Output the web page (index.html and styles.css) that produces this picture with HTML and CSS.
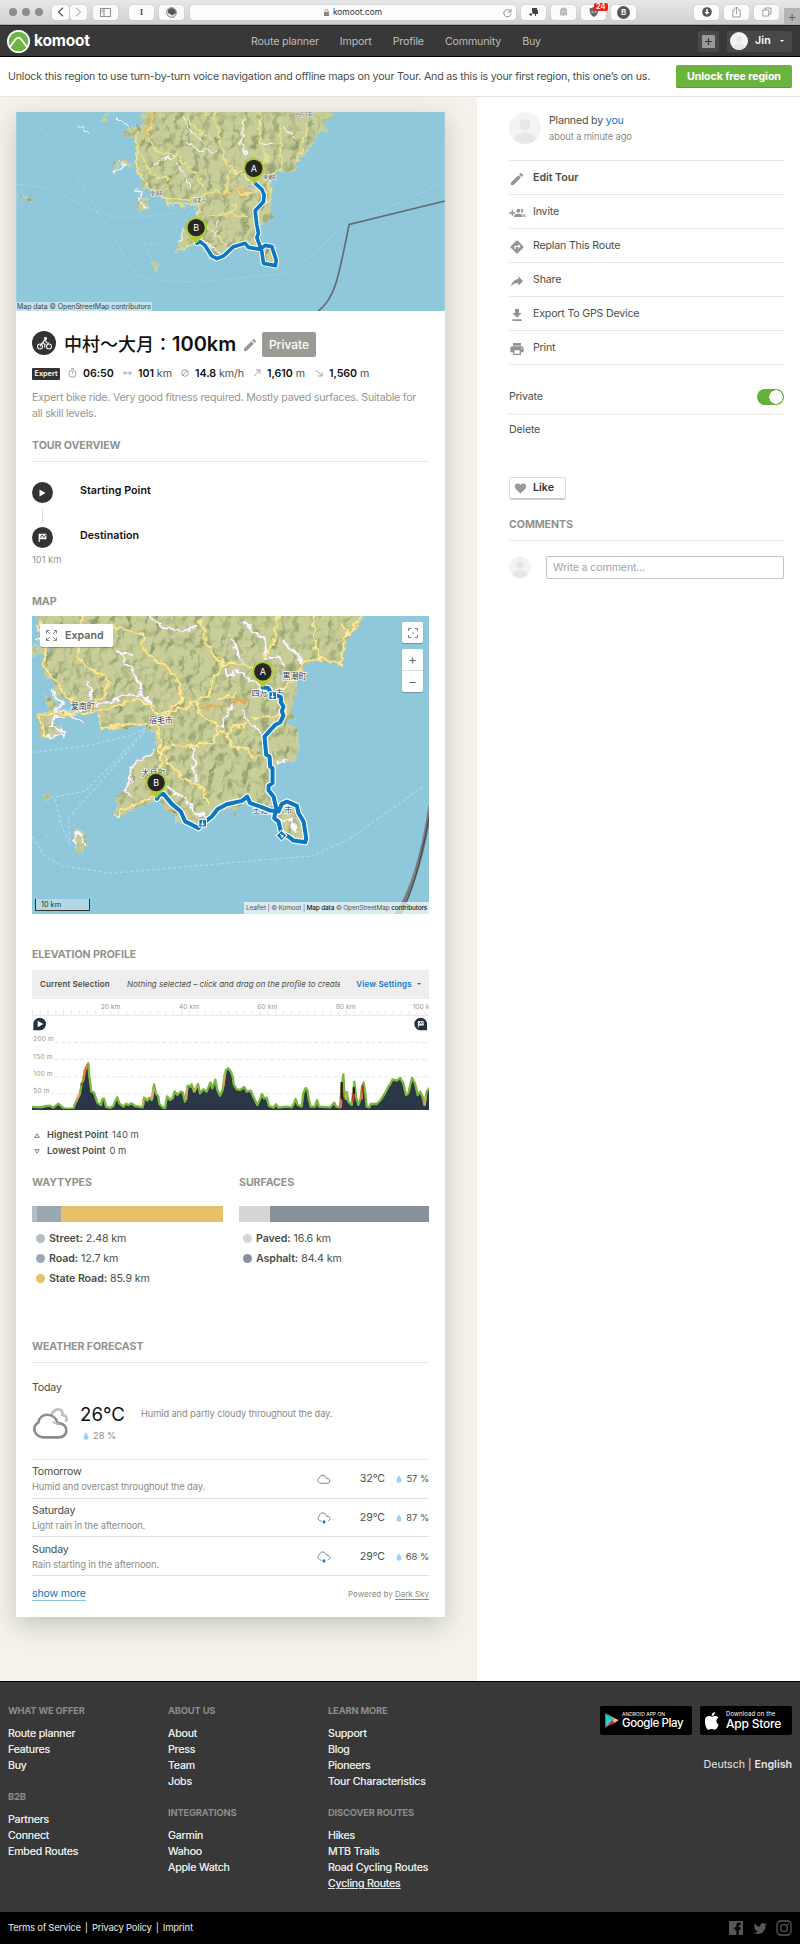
FILE: index.html
```html
<!DOCTYPE html>
<html lang="en">
<head>
<meta charset="utf-8">
<title>中村〜大月：100km | komoot</title>
<link rel="stylesheet" href="styles.css">
</head>
<body>
<svg width="0" height="0" class="defs">
  <defs>
    <filter id="relief" x="0" y="0" width="100%" height="100%" color-interpolation-filters="sRGB">
      <feTurbulence type="fractalNoise" baseFrequency="0.034 0.024" numOctaves="2" seed="8" result="n"/>
      <feDiffuseLighting in="n" surfaceScale="17" diffuseConstant="1.15" lighting-color="#fff" result="l"><feDistantLight azimuth="225" elevation="60"/></feDiffuseLighting>
      <feComponentTransfer in="l" result="s"><feFuncR type="linear" slope=".38" intercept=".59"/><feFuncG type="linear" slope=".32" intercept=".65"/><feFuncB type="linear" slope=".38" intercept=".58"/></feComponentTransfer>
      <feBlend in="SourceGraphic" in2="s" mode="multiply" result="m"/>
      <feComposite in="m" in2="SourceAlpha" operator="in"/>
    </filter>
    <filter id="rough" filterUnits="userSpaceOnUse" x="30" y="30" width="1310" height="920">
      <feTurbulence type="fractalNoise" baseFrequency="0.05" numOctaves="2" seed="3" result="n"/>
      <feDisplacementMap in="SourceGraphic" in2="n" scale="26" xChannelSelector="R" yChannelSelector="G"/>
    </filter>
    <symbol id="pencil" viewBox="0 0 24 24"><path d="M3 17.25V21h3.75L17.81 9.94l-3.75-3.75L3 17.25zM20.71 7.04a1 1 0 0 0 0-1.41l-2.34-2.34a1 1 0 0 0-1.41 0l-1.83 1.83 3.75 3.75 1.83-1.83z"/></symbol>
    <symbol id="person" viewBox="0 0 32 32"><circle cx="16" cy="16" r="16" fill="#f3f4f4"/><circle cx="16" cy="12.500" r="5.500" fill="#e6e8e8"/><path d="M5 27.500c1-9 21-9 22 0a16 16 0 0 1-22 0z" fill="#e6e8e8"/></symbol>
    <symbol id="drop" viewBox="0 0 12 16"><path d="M6 0c1 4 5 6 5 10.500a5 5 0 0 1-10 0C1 6 5 4 6 0z" fill="#97d3fb"/></symbol>
    <symbol id="flag" viewBox="0 0 20 20"><path d="M3 3h14v10H5v5H3z" fill="#fff"/><path d="M8 5h3v2.500H8zm3 2.500h3V10h-3zM5.500 8H8v2H5.500zM14 5h2v2.500h-2z" fill="#333"/></symbol>
    <symbol id="cloud" viewBox="0 0 40 30"><path d="M12 26h19a7 7 0 0 0 1-13.500h-5C25 1 10-1 7 10 0 12 1 25 12 26z" fill="none" stroke="#777" stroke-width="2.600"/></symbol>
    <symbol id="rain" viewBox="0 0 40 34"><path d="M14 26C4 27-1 15 7 11 9-1 25 0 27 12c12-1 13 11 4 13" fill="none" stroke="#777" stroke-width="2.600"/><path d="M20 22l4 6c1 3-1 5-4 5s-5-2-4-5z" fill="#0f76c8"/></symbol>
    <g id="pin"><path d="M0 48L-22 24A32 32 0 1 1 22 24z" fill="#b1c936"/><circle r="26" fill="#262626"/></g>
    <path id="minor" d="M390 52l40 35 60 5 40-15M665 60l45 45 25 20 5 55M630 110l20 45 25 40M790 115l15 30 30 20 10 30M290 158l40 2-30 5 30 40 30 45 10 40 30 20M200 240l10 30 0 30M615 205l5 25 30-20 40 30 40 20M640 310l-20 40-20 35M665 330l20 35 50 45M520 440l5 100 5 10M440 560l70 50 10 25 40 15M335 595l-20-25 20-25-5-40 30-20 40-30M100 275l25 40-25 25 35-10 55 40M150 340l100-30 50-15 60-15 40 40M75 410l50-5 10-10-40-15 5-30 35 0M170 735l-10-10 15-30 20 30 0 15M780 660l35 0 15 45M770 485l35-5M50 80l20 25-20 20M750 170l30 5 10 25"/>
    <path id="major" d="M60 60l15 100-5 45 45 45 10 30 40 20M50 350l55-10 100 0 60-15 90-30 40 25 15 25 100-25 30-25 30-10 5-50 25-20 10-40M190 40l-15 72 0 60 15 25 70 35 0 45-30 30M240 75l100 20 30 10 0 50 70 45 35 50 10 50-45 35-25 30M540 60l30 100 40 35 60-5 40 30M775 40l-10 72-25 60M880 40l5 102 20 35 60 20 5-80 15-10-20-35M1030 40l-50 72M905 180l-50 5-30 50-35 30-10 30 20 55M235 345l10 40 100-15 65 5 10 40 0 90-10 40 20 10M410 375l30-30M425 455l30-25 60 10 60-10 20-40 0-15-55-30-10-35M600 395l25 15 10 30 50 10 10 20 30 0M625 405l10-25 60-10M700 355l80-10M430 465l20 30 50 45 50 25 15 50M280 650l20 0 0-15 80-35 30-20M50 350l15 25 5 35 10 0M590 300l60-15"/>
    <path id="track" d="M727 263L744 265 752 280 782 292 782 308 790 320 785 335 790 347 780 368 765 375 733 410 738 465 748 470 750 500 757 505 757 550 745 558 745 572 760 590 768 625 762 655 775 665 783 700 805 710 820 722 855 727 858 715 850 665 835 640 830 618 800 605 785 612 775 635 750 632 725 622 690 610 681 590 665 603 620 613 592 628 575 650 547 672 535 685 510 672 495 665 482 635 455 612 430 582 418 585 410 597"/>
    <path id="herotrack" d="M765 250L785 268 792 285 790 305 765 332 770 375 775 400 770 412 780 440 785 455 790 490 826 497 828 480 815 440 795 436 780 448 745 442 735 430 700 440 670 468 650 476 635 468 615 437 600 425 590 430"/>
  </defs>
</svg>

<div class="browser">
  <i class="light"></i><i class="light"></i><i class="light"></i>
  <span class="bbtn back"><svg width="7" height="10" viewBox="0 0 7 10"><path d="M6 .8L1.500 5 6 9.200" fill="none" stroke="#555" stroke-width="1.200"/></svg></span>
  <span class="bbtn fwd"><svg width="7" height="10" viewBox="0 0 7 10"><path d="M1 .8L5.500 5 1 9.200" fill="none" stroke="#bbb" stroke-width="1.200"/></svg></span>
  <span class="bbtn side"><svg width="11" height="9" viewBox="0 0 11 9" fill="none" stroke="#777" stroke-width=".8"><path d="M.5.500h10v8H.5zM4 .5v8M1.500 2.500h1.500M1.500 4h1.500"/></svg></span>
  <span class="bbtn read">I</span>
  <span class="bbtn ball"><svg width="11" height="11" viewBox="0 0 11 11"><circle cx="5.500" cy="5.500" r="4.800" fill="#eee" stroke="#777"/><path d="M2 3c4-4 8 0 8 3L6 8.500 4 7 2 6z" fill="#555"/></svg></span>
  <span class="address"><svg width="5" height="7" viewBox="0 0 5 7"><path d="M0 3h5v4H0z" fill="#888"/><path d="M1 3V1.800a1.500 1.500 0 0 1 3 0V3" fill="none" stroke="#888" stroke-width=".8"/></svg>komoot.com
    <svg class="reload" width="9" height="10" viewBox="0 0 9 10"><path d="M7.600 3.500a3.600 3.600 0 1 0 .4 2M8 1v3H5" fill="none" stroke="#777" stroke-width=".8"/></svg></span>
  <span class="bbtn ext e1"><svg width="10" height="10" viewBox="0 0 10 10"><path d="M3 1h5v2h1v4H7v2H6V7H4L3 5z" fill="#444"/><circle cx="1.800" cy="7.500" r="1.300" fill="#444"/></svg></span>
  <span class="bbtn ext e2"><svg width="9" height="10" viewBox="0 0 9 10"><path d="M1 9V4a3.500 3.500 0 0 1 7 0v5L6.500 8l-2 1-2-1z" fill="#bbb"/><path d="M3 4h1v1H3zm2 0h1v1H5z" fill="#eee"/></svg></span>
  <span class="bbtn ext e3"><svg width="10" height="10" viewBox="0 0 10 10"><path d="M5 0l4.500 1.500C9.500 6 8 8.500 5 10 2 8.500.5 6 .5 1.500z" fill="#666"/><path d="M2.500 4h2v2h-2zm3 0h2v2h-2z" fill="#aaa"/></svg><b class="badge">24</b></span>
  <span class="bbtn ext e4"><b class="round">B</b></span>
  <span class="bbtn ext e5"><svg width="10" height="10" viewBox="0 0 10 10"><circle cx="5" cy="5" r="4.800" fill="#555"/><path d="M4.200 2h1.600v3h1.700L5 7.700 2.500 5h1.700z" fill="#fff"/></svg></span>
  <span class="bbtn ext e6"><svg width="9" height="12" viewBox="0 0 9 12" fill="none" stroke="#888" stroke-width=".8"><path d="M3 4H.8v7h7.400V4H6M4.500 8V1M2.500 3l2-2 2 2"/></svg></span>
  <span class="bbtn ext e7"><svg width="10" height="10" viewBox="0 0 10 10" fill="none" stroke="#888" stroke-width=".8"><path d="M.8 3h6v6h-6zM3 3V1h6v6H7"/></svg></span>
  <span class="newtab">+</span>
</div>

<header class="topbar">
  <svg class="mark" width="23" height="23" viewBox="0 0 66 66"><circle cx="33" cy="33" r="33" fill="#fff"/><circle cx="33" cy="33" r="28" fill="#6db544"/><path d="M7 51l18-25q8-8 15 0l19 25" fill="none" stroke="#fff" stroke-width="5"/><path d="M15 54l14-13 4 4 4-4 15 13q-18 12-37 0z" fill="#6db544"/></svg>
  <strong class="wordmark">komoot</strong>
  <nav class="nav"><a>Route planner</a><a>Import</a><a>Profile</a><a>Community</a><a>Buy</a></nav>
  <span class="add"><svg width="13" height="13" viewBox="0 0 13 13"><rect width="13" height="13" rx="1" fill="#999"/><path d="M6.500 3v7M3 6.500h7" stroke="#383838" stroke-width="1.200"/></svg></span>
  <span class="user"><svg width="18" height="18"><use href="#person"/></svg><b>Jin</b><i class="caret"></i></span>
</header>

<div class="unlock"><p>Unlock this region to use turn-by-turn voice navigation and offline maps on your Tour. And as this is your first region, this one’s on us.</p><a class="green">Unlock free region</a></div>

<main class="page">
<section class="left">
<article class="card">
  <div class="hero">
    <svg width="429" height="199" viewBox="48 36 1286 597">
      <rect x="48" y="36" width="1286" height="597" fill="#8fc8da"/>
      <g fill="none" stroke="#b5dbe6" stroke-width="2" stroke-dasharray="8 7"><path d="M80 40L200 175 300 350 410 525q60 25 200 20L860 520q40-15 150-125L1334 245M48 255q60-10 190 55 80 50 170 43l120-15 60-30M430 430l50 0 110-110M430 430l35 65"/></g>
      <g filter="url(#rough)">
      <path filter="url(#relief)" fill="#cfd5a0" d="M437 20L425 60 430 80 405 78 368 95 380 110 412 115 400 130 408 170 405 200 420 235 425 262 450 268 490 285 500 315 540 310 590 312 600 350 555 365 545 400 540 425 520 455 545 452 590 425 630 470 680 455 740 430 770 440 785 490 830 500 825 440 780 435 770 370 800 367 820 350 808 310 815 240 830 215 885 213 892 190 940 130 950 95 978 100 975 70 1010 20zM405 295l35-8 5 35-30 10zM455 485l12-8 10 20-14 20zM38 292l60 0 0 14-30-8zM310 50l15-10 0 15-15 12zM345 185l35-5 25 15-45 2-20 25z"/>
      <g fill="none" stroke="#f7f5f8" stroke-width="4" stroke-linejoin="round"><path d="M735 50l-8 50-8 30 25 35M545 50l25 40 45 40M562 125l25 20 60 12M525 190l20 20 25 55M700 220l25 5 30 25M780 130l40 0M850 85l40 30M345 60l45 15M236 80l35 22M350 183l30 10-40 28M405 265l20 10-10 30 25 20M650 360l0 50M600 410l60 50M540 430l10-50M455 190l70-22"/></g>
      <g fill="none" stroke="#eee28c" stroke-width="5" stroke-linejoin="round"><path d="M455 30l-10 85 25 40 60 10 55 55 35 50-30 45M410 90l0 120 25 45 50 35 70 10 80-25 100 5 60-10M420 165l40 65 50 10M560 40l30 50 50 30M640 30l30 140 35 50M780 30l0 90 20 60-60 30-50 5-15 60M840 75l5 130-35 20-8 90M925 70l-35 120M600 30l40 30M500 290l0 25 90 0 10 45 80 70M620 345l60-5 60 10M710 310l-20 35M540 450l50-25"/></g>
      <path d="M665 283l85-13M457 30l-25 95" fill="none" stroke="#eeb65b" stroke-width="5"/>
      </g>
      <path d="M955 633c50-40 60-100 92-260l287-70" fill="none" stroke="#626a74" stroke-width="5"/>
      <g class="labels tiny"><text x="452" y="284">愛南町</text><text x="578" y="307">宿毛市</text><text x="790" y="236">黒潮町</text><text x="742" y="265">四万十</text><text x="886" y="49">四万十町</text></g>
      <g fill="none" stroke-linejoin="round" stroke-linecap="round"><use href="#herotrack" stroke="#fff" stroke-width="17"/><use href="#herotrack" stroke="#0d78c2" stroke-width="11"/></g>
      <use href="#pin" x="761" y="205"/><use href="#pin" x="588" y="383"/>
      <g class="pinlet"><text x="761" y="215">A</text><text x="588" y="393">B</text></g>
    </svg>
    <span class="credit">Map data © OpenStreetMap contributors</span>
  </div>
  <div class="body">
    <div class="titlerow">
      <span class="sport"><svg width="15" height="13" viewBox="0 0 30 26" fill="none" stroke="#fff" stroke-width="2.200"><circle cx="6" cy="19" r="5"/><circle cx="24" cy="19" r="5"/><path d="M6 19l5-8 5 4-1 6M12 10l4-4 4 6h4"/><circle cx="17" cy="3" r="2" fill="#fff"/></svg></span>
      <h1><span class="cjk">中村〜大月：</span>100km</h1>
      <svg class="edit" width="16" height="16" fill="#999"><use href="#pencil"/></svg><span class="private">Private</span>
    </div>
    <div class="stats">
      <b class="expert">Expert</b>
      <svg width="9" height="10" viewBox="0 0 9 10" class="si"><circle cx="4.500" cy="5.700" r="3.600"/><path d="M3 .6h3M4.500 3.500v2"/></svg><span class="s1"><b>06:50</b></span>
      <svg width="9" height="8" viewBox="0 0 9 8" class="si"><path d="M.6 4h7.800M2.600 2l-2 2 2 2M6.400 2l2 2-2 2"/></svg><span class="s2"><b>101</b> km</span>
      <svg width="8" height="8" viewBox="0 0 8 8" class="si"><circle cx="4" cy="4" r="3.300"/><path d="M1 7l6-6"/></svg><span class="s3"><b>14.8</b> km/h</span>
      <svg width="8" height="8" viewBox="0 0 8 8" class="si"><path d="M1 7l6-6M3 1h4v4"/></svg><span class="s4"><b>1,610</b> m</span>
      <svg width="8" height="8" viewBox="0 0 8 8" class="si"><path d="M1 1l6 6M7 3v4H3"/></svg><span class="s5"><b>1,560</b> m</span>
    </div>
    <p class="desc">Expert bike ride. Very good fitness required. Mostly paved surfaces. Suitable for<br>all skill levels.</p>
    <h2 class="ruled overview">TOUR OVERVIEW</h2>
    <div class="stops">
      <div class="stop first"><span class="dot"><svg width="7" height="8" viewBox="0 0 7 8"><path d="M.5.500l6 3.500-6 3.500z" fill="#fff"/></svg></span><b>Starting Point</b></div>
      <div class="stop"><span class="dot"><svg width="11" height="11"><use href="#flag"/></svg></span><b>Destination</b></div>
      <small>101 km</small>
    </div>
    <h2 class="maphead">MAP</h2>
    <div class="map">
      <svg width="397" height="298" viewBox="36 49 1190 893">
        <rect x="36" y="49" width="1190" height="893" fill="#8fc8da"/>
        <g fill="none" stroke="#b9dde7" stroke-width="3" stroke-dasharray="9 7"><path d="M40 458l160-20 130-30 50-25M75 597l120-23 60-60 120-125M105 597l20 80 25 60M150 735l-5-80L380 390M36 710l40 60 50 28 150 22 400-35 200-17 110-50 225-160"/></g>
        <g filter="url(#rough)">
        <path filter="url(#relief)" fill="#cfd5a0" d="M60 30L50 110 75 160 70 215 100 250 105 280 160 312 155 345 140 330 115 340 100 290 70 290 90 335 45 345 60 375 60 410 100 415 130 390 100 365 110 350 150 345 235 340 240 390 330 385 370 375 405 400 415 450 350 480 330 515 335 540 290 590 285 640 320 640 400 600 425 610 450 640 480 670 530 685 590 635 635 620 645 650 660 620 685 605 720 630 760 640 775 665 785 715 850 730 850 680 825 615 770 610 745 560 760 490 820 485 838 440 830 390 800 360 820 355 815 320 828 285 830 245 860 195 910 183 960 195 970 160 985 110 1050 30zM160 700l18-20 20 30 5 30-40 25 5-40zM70 590l18-8 10 12-22 8zM75 702l12 0-5 8zM30 140l36-5 30 20-61 12z"/>
        <g fill="none" stroke-linejoin="round"><use href="#minor" stroke="#cfbfd0" stroke-width="8"/><use href="#minor" stroke="#faf8fb" stroke-width="6"/><use href="#major" stroke="#d8c068" stroke-width="9"/><use href="#major" stroke="#f8ea9c" stroke-width="6"/></g>
        <path d="M540 323l70-5 80-25" fill="none" stroke="#e8a957" stroke-width="8"/>
        </g>
        <path d="M1230 620q-35 230-105 330" fill="none" stroke="#777d83" stroke-width="12"/><path d="M1230 630q-40 230-90 312" fill="none" stroke="#444" stroke-width="3"/>
        <g class="labels"><text x="152" y="327">愛南町</text><text x="387" y="369">宿毛市</text><text x="787" y="237">黒潮町</text><text x="694" y="290">四万十市</text><text x="364" y="527">大月町</text><text x="696" y="640">土佐清水市</text></g>
        <g fill="none" stroke-linejoin="round" stroke-linecap="round"><use href="#track" stroke="#fff" stroke-width="19"/><use href="#track" stroke="#0d78c2" stroke-width="12"/></g>
        <g fill="#0d78c2" stroke="#fff" stroke-width="3"><path d="M746 276h23v23h-23zM536 658h23v23h-23zM784 691l16 16-16 16-16-16z"/><path fill="none" d="M757 280v14m-5-5l5 5 5-5M547 662v14m-5-5l5 5 5-5M780 703l8 8m0-6v6h-6"/></g>
        <use href="#pin" x="728" y="216"/><use href="#pin" x="408" y="548"/>
        <g class="pinlet"><text x="728" y="227">A</text><text x="408" y="559">B</text></g>
      </svg>
      <span class="expand"><svg width="11" height="11" viewBox="0 0 11 11" fill="none" stroke="#888"><path d="M.5 3.500v-3h3M7.500.500h3v3M10.500 7.500v3h-3M3.500 10.500h-3v-3M.5.500L4 4M10.500.500L7 4M10.500 10.500L7 7M.5 10.500L4 7"/></svg>Expand</span>
      <span class="locate"><svg width="10" height="10" viewBox="0 0 10 10" fill="none" stroke="#777"><path d="M.5 3V.5H3M7 .5h2.500V3M9.500 7v2.500H7M3 9.500H.5V7M4.200 5h1.600"/></svg></span>
      <span class="zoomer"><i>+</i><i>−</i></span>
      <span class="scale">10 km</span>
      <span class="leaf">Leaflet | © Komoot | <b>Map data</b> © OpenStreetMap <b>contributors</b></span>
    </div>
    <h2 class="elevhead">ELEVATION PROFILE</h2>
    <div class="selection"><b>Current Selection</b><em>Nothing selected – click and drag on the profile to create</em><a>View Settings <i class="caret"></i></a></div>
    <svg class="chart" width="397" height="111" viewBox="36 207 1191 333">
      <g class="axis"><text x="242" y="236" textLength="59">20 km</text><text x="477" y="236" textLength="60">40 km</text><text x="712" y="236" textLength="60">60 km</text><text x="947" y="236" textLength="60">80 km</text><text x="1178" y="236">100 k</text>
      <text x="40" y="334" textLength="61">200 m</text><text x="40" y="386" textLength="58">150 m</text><text x="40" y="438" textLength="58">100 m</text><text x="40" y="489" textLength="49">50 m</text></g>
      <path d="M36 248.500h1191" stroke="#ddd" stroke-width="13" stroke-dasharray="2 21.550"/>
      <path d="M36 256h1191" stroke="#e6e6e6" stroke-width="3"/>
      <path d="M104 337.500h1123M104 388.500h1123M104 440.500h1123M92 491.500h1135" stroke="#e6e6e6" stroke-width="3" stroke-dasharray="12 7"/>
      <path d="M40 301v-19a19 19 0 1 1 19 19zM1221 301v-19a19 19 0 1 0-19 19z" fill="#253040"/><path d="M53 272l17 10-17 10z" fill="#fff"/><use href="#flag" x="1190" y="270" width="25" height="25"/>
      <path fill="#2b3647" stroke="#78b83f" stroke-width="7" stroke-linejoin="round" d="M30 550L30 530 60 532 80 528 90 527 100 533 115 521 125 530 135 536 160 535 170 510 180 490 185 460 190 450 195 420 205 400 208 440 214 485 222 488 232 518 243 525 246 508 252 506 258 530 270 534 280 528 285 515 292 502 298 520 310 530 318 521 325 525 335 520 345 528 368 532 372 503 382 512 388 503 395 510 402 463 408 490 415 500 418 522 426 530 435 536 441 499 450 510 458 505 464 484 472 495 482 485 488 488 495 515 503 467 512 470 515 463 522 485 534 462 540 490 550 478 560 485 566 470 571 457 577 475 586 449 592 480 600 497 608 480 613 440 618 420 625 415 632 425 638 440 641 463 650 478 660 480 673 471 680 485 692 482 700 500 712 525 720 508 726 492 732 505 740 503 747 528 760 533 768 523 775 533 800 530 815 532 822 520 827 507 833 525 845 530 850 490 857 474 862 480 867 510 872 530 885 530 891 510 897 530 930 532 943 518 948 530 960 532 965 470 970 433 974 500 981 487 985 515 995 525 1003 455 1008 500 1015 525 1022 505 1026 470 1031 458 1036 490 1040 530 1048 532 1052 522 1070 522 1082 510 1095 490 1105 470 1112 460 1118 448 1130 452 1141 444 1150 460 1158 495 1165 490 1176 444 1185 460 1193 495 1200 485 1208 500 1213 525 1220 485 1227 475 1235 475V550z"/>
      <g fill="none" stroke-width="7"><path d="M190 450l5-30 8-17M962 532l2-20M1025 490l0 18" stroke="#ef7040"/><path d="M182 463h6M1000 515v-22M1028 488v-22" stroke="#dc1f31"/><path d="M965 508v-52M1002 492v-20" stroke="#431419"/><path d="M168 515l12-25M396 508l5-30M498 510l4-35M610 470l5-40M977 510l4-20M1158 490l4 0M1214 525l3-25M370 525v-15M523 485l8-18" stroke="#d8a854"/></g>
      <path d="M36 538.500h1191" stroke="#2b3647" stroke-width="3"/>
    </svg>
    <div class="points"><p><svg width="6" height="5" viewBox="0 0 6 5" class="tri"><path d="M3 .8L5.300 4.400H.7z"/></svg><b>Highest Point</b> 140 m</p><p><svg width="6" height="5" viewBox="0 0 6 5" class="tri"><path d="M3 4.200L.7.600h4.600z"/></svg><b>Lowest Point</b> 0 m</p></div>
    <div class="split">
      <div><h2>WAYTYPES</h2><div class="bar"><i class="c-street" style="width:2.5%"></i><i class="c-road" style="width:12.6%"></i><i class="c-state" style="width:84.9%"></i></div>
        <ul><li><i class="c-street"></i><b>Street:</b> 2.48 km</li><li><i class="c-road"></i><b>Road:</b> 12.7 km</li><li><i class="c-state"></i><b>State Road:</b> 85.9 km</li></ul></div>
      <div><h2>SURFACES</h2><div class="bar"><i class="c-paved" style="width:16.5%"></i><i class="c-asphalt" style="width:83.5%"></i></div>
        <ul><li><i class="c-paved"></i><b>Paved:</b> 16.6 km</li><li><i class="c-asphalt"></i><b>Asphalt:</b> 84.4 km</li></ul></div>
    </div>
    <h2 class="ruled weather">WEATHER FORECAST</h2>
    <p class="today">Today</p>
    <div class="now">
      <svg class="bigcloud" width="36" height="31" viewBox="0 0 108 93" fill="none"><path d="M55 20C68-4 92 2 88 20c16 4 16 16 8 20" stroke="#bcc3c4" stroke-width="8"/><path d="M30 88H78a20 20 0 0 0 2-42H74C66 12 20 12 16 44-4 56 2 84 30 88z" fill="#fff" stroke="#8c8c8c" stroke-width="8"/><path d="M60 40q8 12 18 6" stroke="#bcc3c4" stroke-width="5"/></svg>
      <div class="temp"><span class="deg">26°C</span><span class="hum"><svg width="6" height="8"><use href="#drop"/></svg>28 %</span></div>
      <span class="nowtext">Humid and partly cloudy throughout the day.</span>
    </div>
    <div class="day"><div><p>Tomorrow</p><small>Humid and overcast throughout the day.</small></div><svg width="14" height="11"><use href="#cloud"/></svg><span class="t">32°C</span><span class="h"><svg width="6" height="8"><use href="#drop"/></svg>57 %</span></div>
    <div class="day"><div><p>Saturday</p><small>Light rain in the afternoon.</small></div><svg width="14" height="12"><use href="#rain"/></svg><span class="t">29°C</span><span class="h"><svg width="6" height="8"><use href="#drop"/></svg>87 %</span></div>
    <div class="day"><div><p>Sunday</p><small>Rain starting in the afternoon.</small></div><svg width="14" height="12"><use href="#rain"/></svg><span class="t">29°C</span><span class="h"><svg width="6" height="8"><use href="#drop"/></svg>68 %</span></div>
    <div class="more"><a>show more</a><span>Powered by <u>Dark Sky</u></span></div>
  </div>
</article>
</section>

<aside class="aside">
  <div class="author"><svg width="32" height="32"><use href="#person"/></svg><div><p>Planned by <a>you</a></p><small>about a minute ago</small></div></div>
  <ul class="actions">
    <li><svg viewBox="0 0 24 24"><use href="#pencil"/></svg><b>Edit Tour</b></li>
    <li><svg viewBox="0 0 24 24"><path d="M4 7v4H0v2h4v0 3h2v-3h3v-2H6V7zM14 11.500a3 3 0 1 0 0-6 3 3 0 0 0 0 6zM18.500 11.500a3 3 0 1 0 0-6l-.8.100a5 5 0 0 1 0 5.700zM14 13c-3 0-6.500 1.300-6.500 3.500V18h13v-1.500C20.500 14.300 17 13 14 13zM20 13.200c1.400.8 2 2 2 3.300V18h2.500v-1.500c0-1.600-2-2.700-4.500-3.300z"/></svg>Invite</li>
    <li><svg viewBox="0 0 24 24"><path d="M21.710 11.290l-9-9a1 1 0 0 0-1.410 0l-9 9a1 1 0 0 0 0 1.410l9 9a1 1 0 0 0 1.410 0l9-9a1 1 0 0 0 0-1.410zM14 14.500V12h-4v3H8v-4a1 1 0 0 1 1-1h5V7.500l3.500 3.500-3.500 3.500z"/></svg>Replan This Route</li>
    <li><svg viewBox="0 0 24 24"><path d="M14 5v4C7 10 4 15 3 20c2.500-3.500 6-5.100 11-5.100V19l7-7z"/></svg>Share</li>
    <li><svg viewBox="0 0 24 24"><path d="M19 9h-4V3H9v6H5l7 7zM5 18.500V21h14v-2.500z"/></svg>Export To GPS Device</li>
    <li><svg viewBox="0 0 24 24"><path d="M19 8H5a3 3 0 0 0-3 3v6h4v4h12v-4h4v-6a3 3 0 0 0-3-3zm-3 11H8v-5h8zm3-7a1 1 0 1 1 0-2 1 1 0 0 1 0 2zM18 3H6v4h12z"/></svg>Print</li>
  </ul>
  <div class="privacy"><span>Private</span><i class="toggle"></i></div>
  <p class="delete">Delete</p>
  <a class="like"><svg width="13" height="13" viewBox="0 0 24 24" fill="#999"><path d="M12 21.500C5 15 1.500 12.500 1.500 8 1.500 2 9 1 12 5.500 15 1 22.500 2 22.500 8c0 4.500-3.500 7-10.500 13.500z"/></svg>Like</a>
  <h2 class="ruled comments">COMMENTS</h2>
  <div class="write"><svg width="22" height="22"><use href="#person"/></svg><span>Write a comment...</span></div>
</aside>
</main>

<footer class="footer">
  <div class="fcol"><h3>WHAT WE OFFER</h3><a>Route planner</a><a>Features</a><a>Buy</a><h3>B2B</h3><a>Partners</a><a>Connect</a><a>Embed Routes</a></div>
  <div class="fcol"><h3>ABOUT US</h3><a>About</a><a>Press</a><a>Team</a><a>Jobs</a><h3>INTEGRATIONS</h3><a>Garmin</a><a>Wahoo</a><a>Apple Watch</a></div>
  <div class="fcol"><h3>LEARN MORE</h3><a>Support</a><a>Blog</a><a>Pioneers</a><a>Tour Characteristics</a><h3>DISCOVER ROUTES</h3><a>Hikes</a><a>MTB Trails</a><a>Road Cycling Routes</a><a><u>Cycling Routes</u></a></div>
  <div class="apps">
    <div class="stores">
      <span class="store play"><svg width="14" height="15" viewBox="0 0 42 45"><path d="M1 1v43l22-22z" fill="#2bd3c6"/><path d="M1 1l22 21 6-7z" fill="#69b7a0"/><path d="M1 44l22-22 6 7z" fill="#e8274b"/><path d="M29 15l12 7-12 8-7-8z" fill="#f6b36b"/></svg><span><small>ANDROID APP ON</small><b>Google Play</b></span></span>
      <span class="store apple"><svg width="14" height="18" viewBox="0 0 42 54" fill="#fff"><path d="M21 14c4 0 7-3 11-2 3 0 6 2 8 5-9 6-7 17 1 21-3 8-7 15-12 15-4 0-5-2-9-2s-5 2-9 2C2 53-6 20 5 14c6-4 12 0 16 0zM20 12c0-6 4-11 10-12 0 6-4 12-10 12z"/></svg><span><small>Download on the</small><b>App Store</b></span></span>
    </div>
    <p class="lang">Deutsch&nbsp;|&nbsp;<b>English</b></p>
  </div>
</footer>
<div class="legal">
  <p>Terms of Service<i>|</i>Privacy Policy<i>|</i>Imprint</p>
  <svg width="64" height="16" viewBox="0 0 192 48"><path fill="#575757" d="M3 3h42v42H32V29h6v-7h-6v-4q0-4 6-3V8c-10-2-13 2-13 9v5h-6v7h6v16H3z"/><path fill="#575757" transform="translate(75 4) scale(1.800)" d="M23 3a10.900 10.900 0 0 1-3.140 1.530 4.480 4.480 0 0 0-7.860 3v1A10.660 10.660 0 0 1 3 4s-4 9 5 13a11.640 11.640 0 0 1-7 2c9 5 20 0 20-11.500l-.08-.83A7.720 7.720 0 0 0 23 3z"/><g fill="none" stroke="#575757" stroke-width="4"><rect x="147" y="3" width="42" height="42" rx="11"/><circle cx="168" cy="24" r="10"/><path d="M178 13h5"/></g></svg>
</div>
</body>
</html>
```

FILE: styles.css
```css
* { box-sizing: border-box; }
body { margin: 0; width: 800px; background: #fff; color: #4b4f48; font: 10.67px/16px Inter, "Noto Sans CJK JP", sans-serif; letter-spacing: -0.2px; }
p, h1, h2, h3, ul { margin: 0; padding: 0; }
ul { list-style: none; }
svg { display: block; flex: none; }
b { font-weight: 600; }
.defs { position: absolute; }

.browser { height: 25px; display: flex; align-items: center; padding-left: 9px; background: linear-gradient(#e8e8e8, #d0d0d0); border-bottom: 1px solid #aaa; }
.light { width: 8px; height: 8px; border-radius: 50%; background: #8b8e90; margin-right: 5px; }
.bbtn { height: 15px; width: 25px; flex: none; display: flex; align-items: center; justify-content: center; background: #fbfbfb; border-radius: 3px; box-shadow: 0 0 1px #999; color: #555; }
.back { width: 17px; margin-left: 4px; }
.fwd { width: 17px; margin-left: 1px; }
.side { margin-left: 6px; }
.read { margin-left: 11px; font: 700 9px/15px "Liberation Serif", serif; }
.ball { margin-left: 5px; }
.address { position: relative; width: 326px; height: 15px; flex: none; margin-left: 6px; background: #fdfdfd; border-radius: 3px; box-shadow: 0 0 1px #999; display: flex; align-items: center; justify-content: center; gap: 4px; font-size: 8.400px; color: #333; letter-spacing: 0; }
.reload { position: absolute; right: 4px; top: 3px; }
.ext { margin-left: 5px; width: 25px; position: relative; }
.e5 { margin-left: 58px; }
.round { width: 13px; height: 13px; border-radius: 50%; background: #555; color: #fff; font-size: 8px; line-height: 13px; text-align: center; }
.badge { position: absolute; left: 13px; top: -2px; background: #fb1b1e; color: #fff; border-radius: 2px; font-size: 7.500px; line-height: 8px; padding: 0 2px; letter-spacing: 0; }
.newtab { margin-left: auto; width: 16px; height: 16px; align-self: flex-end; background: #b5b5b5; color: #666; text-align: center; font-size: 14px; line-height: 16px; }

.topbar { height: 32px; display: flex; align-items: center; padding-left: 7px; background: #383838; border-top: 1px solid #222; border-bottom: 1px solid #000; }
.wordmark { width: 57px; margin-left: 4px; color: #fff; font: 700 15.500px/20px Inter, sans-serif; letter-spacing: -0.2px; }
.nav { display: flex; gap: 21px; margin-left: 160px; color: #bcbcbc; letter-spacing: -.16px; padding-top: 1px; }
.add { margin-left: auto; width: 21px; height: 21px; border-radius: 2px; background: #484848; display: flex; align-items: center; justify-content: center; }
.user { width: 65px; height: 21px; margin: 0 8px; border-radius: 2px; background: #484848; display: flex; align-items: center; padding-left: 3px; color: #fff; }
.user b { margin-left: 7px; width: 25px; letter-spacing: .1px; }
.caret { display: inline-block; border: 2.500px solid transparent; border-top-color: currentColor; border-bottom: 0; vertical-align: 2px; }
.unlock { height: 40px; display: flex; align-items: center; justify-content: space-between; padding: 0 8px; border-bottom: 1px solid #e4e4e4; white-space: nowrap; }
.unlock p { padding-top: 1px; letter-spacing: -.21px; }
.green { width: 116px; height: 23px; background: #6bb53f; border-bottom: 1px solid #559c2e; border-radius: 2px; color: #fff; font-weight: 700; line-height: 23px; text-align: center; letter-spacing: -.1px; }

.page { display: flex; height: 1584px; }
.left { width: 477px; background: #f4f2ea; padding: 15px 0 0 16px; }
.card { width: 429px; height: 1505px; background: #fff; box-shadow: 0 8px 24px rgba(80,85,60,.28); }
.hero { position: relative; height: 199px; }
.credit { position: absolute; left: 0; bottom: 0; height: 9px; padding: 0 1px; background: rgba(255,255,255,.45); font-size: 7px; line-height: 9px; color: #444; letter-spacing: -.05px; }
.labels { font: 24px "Noto Sans CJK JP", sans-serif; fill: #333; stroke: #fff; stroke-width: 4; paint-order: stroke; letter-spacing: 0; }
.tiny { font-size: 13px; stroke-width: 2; }
.pinlet { font: 27px Inter, sans-serif; fill: #fff; text-anchor: middle; }
.body { padding: 0 16px; }
.titlerow { margin-top: 18px; height: 28px; display: flex; align-items: center; }
.sport { width: 24px; height: 24px; border-radius: 50%; background: #333; display: flex; align-items: center; justify-content: center; }
h1 { margin-left: 8px; width: 174px; font-size: 20px; line-height: 28px; font-weight: 600; color: #111; letter-spacing: 0; white-space: nowrap; }
.cjk { font-size: 18px; font-weight: 500; font-family: "Noto Sans CJK JP", sans-serif; }
.edit { margin: 4px 0 0 4px; }
.private { margin: 3px 0 0 4px; width: 54px; height: 25px; border-radius: 2px; background: #9a9b94; color: #fff; font-size: 12px; line-height: 25px; text-align: center; font-weight: 500; letter-spacing: 0; }
.stats { display: flex; align-items: center; height: 16px; margin-top: 8px; white-space: nowrap; letter-spacing: 0; }
.stats b { color: #111; }
.stats .expert { width: 28px; height: 12px; margin: 2px 8px 0 0; background: #333; color: #fff; border-radius: 1px; font-size: 7.300px; line-height: 12px; text-align: center; }
.si { fill: none; stroke: #999; stroke-width: .9; }
.stats span { margin-left: 6px; padding-top: 1px; letter-spacing: -.05px; }
.stats .s1 { width: 40px; } .stats .s2 { width: 43px; } .stats .s3 { width: 58px; } .stats .s4 { width: 48px; }
.desc { margin-top: 9px; color: #96978f; white-space: nowrap; letter-spacing: -.235px; }
h2 { padding-top: 1px; margin-bottom: -1px; font-size: 10.67px; line-height: 16px; font-weight: 700; color: #92938b; letter-spacing: -.1px; }
.ruled { padding-bottom: 7px; margin-bottom: 0; border-bottom: 1px solid #e6e6e6; }
.overview { margin-top: 15px; }
.stops { margin-top: 20px; color: #111; }
.stop { display: flex; height: 21px; }
.stop b { padding-top: 1px; letter-spacing: .05px; }
.first { height: 45px; position: relative; }
.first::after { content: ""; position: absolute; left: 10px; top: 26px; height: 15px; border-left: 1px dotted #bbb; }
.dot { width: 21px; height: 21px; margin-right: 27px; border-radius: 50%; background: #333; display: flex; align-items: center; justify-content: center; }
.stops small { display: block; margin-top: 4px; font-size: 9.330px; color: #96978f; letter-spacing: 0; }
.maphead { margin-top: 25px; }
.map { position: relative; height: 298px; margin-top: 7px; }
.expand, .locate, .zoomer { position: absolute; background: #fff; border-radius: 2px; box-shadow: 0 1px 1px rgba(0,0,0,.25); display: flex; align-items: center; }
.expand { left: 8px; top: 8px; width: 73px; height: 23px; padding-left: 6px; gap: 8px; font-weight: 600; letter-spacing: 0; color: #666; }
.locate { left: 370px; top: 6px; width: 21px; height: 21px; justify-content: center; }
.zoomer { left: 370px; top: 33px; width: 21px; height: 43px; flex-direction: column; color: #666; }
.zoomer i { height: 22px; width: 21px; font: 13px/20px Inter, sans-serif; text-align: center; }
.zoomer i + i { border-top: 1px solid #ddd; }
.scale { position: absolute; left: 3px; bottom: 3px; width: 55px; height: 12px; border: 1px solid #333; border-top: 0; background: rgba(255,255,255,.3); font-size: 7.300px; line-height: 11px; padding-left: 5px; color: #333; letter-spacing: 0; }
.leaf { position: absolute; right: 0; bottom: 0; width: 185px; height: 12px; padding-left: 2px; background: rgba(255,255,255,.65); font-size: 6.500px; line-height: 12px; color: #555; letter-spacing: -.17px; white-space: nowrap; }
.leaf b { font-weight: 500; color: #222; }
.elevhead { margin-top: 32px; }
.selection { display: flex; height: 29px; margin-top: 8px; padding: 0 8px; background: #eee; font-size: 8px; line-height: 28px; letter-spacing: 0; }
.selection b { width: 87px; letter-spacing: .12px; }
.selection em { width: 213px; overflow: hidden; white-space: nowrap; }
.selection a { margin-left: auto; color: #0f76c8; font-weight: 600; letter-spacing: .2px; white-space: nowrap; }
.selection .caret { margin-left: 3px; }
.chart .axis { font: 20px Inter, sans-serif; fill: #999; letter-spacing: 0; }
.points { margin-top: 17px; font-size: 9.330px; letter-spacing: 0; padding-left: 2px; }
.points p { display: flex; align-items: center; }
.points b { margin: 0 4px 0 7px; letter-spacing: .06px; }
.tri { fill: none; stroke: #666; stroke-width: .8; }
.split { display: grid; grid-template-columns: 191px 190px; column-gap: 16px; margin-top: 15px; height: 114px; }
.bar { display: flex; height: 16px; margin: 16px 0 6px; }
.split li { height: 20px; line-height: 21px; padding-left: 4px; display: flex; align-items: center; gap: 3px; letter-spacing: -.1px; }
.split li i { width: 9px; height: 9px; border-radius: 50%; margin-right: 1px; }
.c-street { background: #b3bec4; } .c-road { background: #9ba8b3; } .c-state { background: #e7c06c; } .c-paved { background: #d5d7d7; } .c-asphalt { background: #86919c; }
.weather { margin-top: 50px; }
.today { margin-top: 16px; padding-top: 1px; margin-bottom: -1px; }
.now { display: flex; height: 65px; border-bottom: 1px solid #e6e6e6; }
.bigcloud { margin: 13px 11px 0 1px; }
.temp { width: 61px; }
.deg { display: block; margin-top: 8px; font-size: 18.670px; line-height: 23px; color: #111; letter-spacing: 0; }
.hum { display: flex; align-items: center; gap: 4px; padding: 2px 0 0 3px; font-size: 9.330px; color: #8b8c85; letter-spacing: 0; }
.nowtext { margin-top: 11px; font-size: 9.330px; color: #8b8c85; letter-spacing: -.12px; }
.day { display: flex; align-items: center; height: 38.670px; padding-top: 1px; border-bottom: 1px solid #e0e0e0; }
.day div { width: 285px; line-height: 15px; }
.day small { display: block; font-size: 9.330px; color: #8b8c85; letter-spacing: -.1px; }
.day .t { width: 54px; text-align: right; letter-spacing: -.1px; }
.h { margin-left: auto; display: flex; align-items: center; gap: 4px; font-size: 9.330px; letter-spacing: -.05px; }
.more { display: flex; justify-content: space-between; margin-top: 10px; }
.more a { color: #0f76c8; border-bottom: 1px solid #8fc1e4; line-height: 13px; height: 14px; margin-top: 1px; }
.more span { font-size: 8px; color: #8b8c85; letter-spacing: 0; }
.more u { text-underline-offset: 2px; }

.aside { margin-left: 32px; width: 275px; padding-top: 15px; }
.author { display: flex; gap: 8px; height: 49px; border-bottom: 1px solid #e6e6e6; }
.author div { padding-top: 1px; }
.author small { display: block; font-size: 9.330px; color: #8b8c85; letter-spacing: -.1px; }
.author a { color: #0f76c8; }
.actions li { display: flex; align-items: center; height: 34px; border-bottom: 1px solid #e6e6e6; }
.actions b { letter-spacing: -.05px; }
.actions svg { width: 16px; height: 16px; margin: 2px 8px 0 0; fill: #949494; overflow: visible; }
.privacy { display: flex; justify-content: space-between; align-items: center; margin-top: 16px; height: 34px; border-bottom: 2px solid #f2f2f2; }
.toggle { width: 27px; height: 16px; border-radius: 8px; background: radial-gradient(circle at 19px 8px, #fff 6.500px, #65b037 7px); }
.delete { margin-top: 7px; }
.like { display: flex; align-items: center; gap: 6px; width: 57px; height: 23px; margin-top: 39px; padding-left: 4px; border: 1px solid #ddd; border-bottom: 2px solid #ccc; border-radius: 3px; font-weight: 600; color: #333; letter-spacing: 0; }
.comments { margin-top: 16px; }
.write { display: flex; justify-content: space-between; margin-top: 15px; }
.write span { width: 238px; height: 23px; border: 1px solid #c4c4c4; border-radius: 2px; padding-left: 6px; line-height: 22px; color: #a5a5a5; letter-spacing: -.15px; }

.footer { height: 231px; display: flex; padding: 21px 8px 0; background: #383838; border-top: 1px solid #000; color: #e4e4e4; }
.fcol { width: 160px; }
.fcol a { display: block; text-shadow: 0 0 .5px #e4e4e4; }
.fcol h3 { font-size: 9.330px; line-height: 16px; font-weight: 700; color: #8c8c8c; margin-bottom: 7px; letter-spacing: -.15px; }
.fcol a + h3 { margin-top: 15px; }
.apps { margin-left: auto; width: 192px; }
.stores { display: flex; gap: 8px; margin-top: 3px; }
.store { display: flex; align-items: center; width: 92px; height: 29px; background: #000; border-radius: 2px; color: #fff; padding-left: 5px; gap: 3px; }
.apple { gap: 7px; }
.store small, .store b { display: block; white-space: nowrap; }
.store small { font-size: 5px; line-height: 6px; letter-spacing: 0; }
.store b { font-size: 11.500px; line-height: 13px; font-weight: 500; letter-spacing: -.4px; }
.store.apple small { font-size: 6px; letter-spacing: .1px; }
.store.apple b { font-size: 12px; letter-spacing: -.2px; }
.lang { text-align: right; margin-top: 22px; letter-spacing: -.02px; }
.legal { height: 32px; display: flex; align-items: center; justify-content: space-between; background: #000; padding: 0 8px; color: #d4d4d4; font-size: 9.330px; font-weight: 500; letter-spacing: -.19px; }
.legal i { font-style: normal; margin: 0 4px; }
```
